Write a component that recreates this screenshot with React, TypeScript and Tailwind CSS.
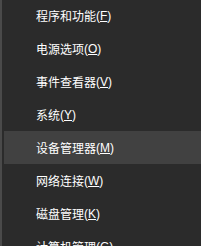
import React from 'react';

const items = [
  { label: '程序和功能', key: 'F' },
  { label: '电源选项', key: 'O' },
  { label: '事件查看器', key: 'V' },
  { label: '系统', key: 'Y' },
  { label: '设备管理器', key: 'M', active: true },
  { label: '网络连接', key: 'W' },
  { label: '磁盘管理', key: 'K' },
  { label: '计算机管理', key: 'G' },
];

export default function App() {
  return (
    <div className="w-[201px] h-[247px] overflow-hidden bg-[#2b2b2b] border-l-2 border-[#4a4a4a] flex flex-col -mt-[1px] pl-[2px] font-['Microsoft_YaHei','Noto_Sans_CJK_SC',sans-serif]">
      {items.map((it) => (
        <div
          key={it.key}
          className={`h-[33px] shrink-0 flex items-center pl-[32px] text-[12px] text-white ${it.active ? 'bg-[#414141]' : ''}`}
        >
          <span>{it.label}</span>
          <span className="font-['Liberation_Sans',sans-serif]">
            (<span className="underline underline-offset-1">{it.key}</span>)
          </span>
        </div>
      ))}
    </div>
  );
}
